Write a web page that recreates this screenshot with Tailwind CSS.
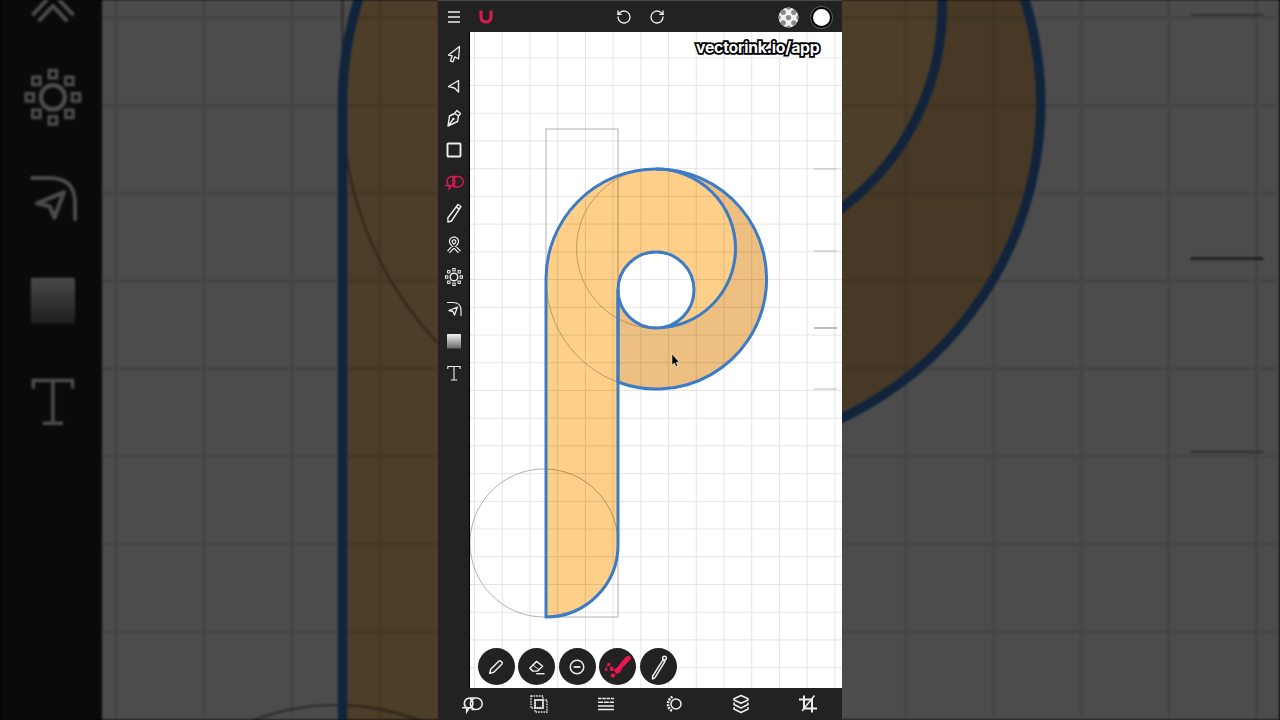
<!DOCTYPE html>
<html lang="en">
<head>
    <meta charset="UTF-8">
    <title>vectorink.io/app</title>
    <script src="https://cdn.jsdelivr.net/npm/@tailwindcss/browser@4"></script>
</head>
<body class="bg-black">
    <!-- Shared icons and the drawing, used by the app and by the blurred backdrop -->
    <svg class="absolute w-0 h-0" aria-hidden="true">
        <defs>
            <pattern id="grid" x="474" y="57.3" width="27.72" height="27.72" patternUnits="userSpaceOnUse">
                <path d="M0 27.72V0H27.72" fill="none" stroke="#e4e4e4" stroke-width="2"/>
            </pattern>
            <linearGradient id="fade" x1="0" y1="0" x2="0" y2="1">
                <stop offset="0" stop-color="#f4f4f4"/>
                <stop offset="1" stop-color="#666"/>
            </linearGradient>
            <clipPath id="chk"><circle cx="10" cy="10" r="9.5"/></clipPath>

            <g id="drawing" class="isolate">
                <rect x="470" y="32" width="372" height="656" fill="#fff"/>
                <rect x="470" y="32" width="372" height="656" fill="url(#grid)"/>
                <!-- guides -->
                <g fill="none" stroke="#a2a2a2" stroke-width="0.7">
                    <rect x="546" y="129" width="72" height="488" stroke="#909090"/>
                    <circle cx="544" cy="543" r="74" stroke="#909090"/>
                    <circle cx="656.5" cy="248.5" r="80"/>
                    <circle cx="656" cy="279" r="110"/>
                    <path d="M814 169H837M814 251H837M814 389H837"/>
                    <path d="M814 328H837" stroke="#444"/>
                </g>
                <!-- letter p: fills multiply so the grid and guides show through -->
                <g class="mix-blend-multiply">
                    <path fill="#edc081" d="M656 169A110 110 0 1 1 618 382V290A38 38 0 0 0 656 328A79.5 79.5 0 0 0 656 169Z"/>
                    <path fill="#fdcf88" d="M546 617V279A110 110 0 0 1 656 169A79.5 79.5 0 0 1 656 328A38 38 0 0 0 656 252A38 38 0 0 0 618 290V545A72 72 0 0 1 546 617Z"/>
                </g>
                <g fill="none" stroke="#3b7bc8" stroke-width="3" stroke-linejoin="round">
                    <path d="M656 169A110 110 0 1 1 618 382V290A38 38 0 0 0 656 328"/>
                    <path d="M546 617V279A110 110 0 0 1 656 169A79.5 79.5 0 0 1 656 328A38 38 0 0 0 656 252A38 38 0 0 0 618 290V545A72 72 0 0 1 546 617Z"/>
                </g>
                <path d="M672 354V365L674.5 363L676 366.5L677.6 365.6L676.2 362.4L679 362Z" fill="#000" stroke="#fff" stroke-width="0.5"/>
            </g>
        </defs>

        <symbol id="i-select" viewBox="0 0 20 20"><path d="M15.5 2.5L4.5 11L8.3 11.8L6.3 16.8L9 17.8L10.8 12.8L14.5 15Z" fill="none" stroke="currentColor" stroke-width="1.3" stroke-linejoin="round"/></symbol>
        <symbol id="i-direct" viewBox="0 0 20 20"><path d="M14.5 4.5L4.5 10.5L10.5 12L14.5 16Z" fill="none" stroke="currentColor" stroke-width="1.4" stroke-linejoin="round"/></symbol>
        <symbol id="i-pen" viewBox="0 0 20 20"><path d="M13 2.5L16.5 5.5L14.5 8L13.5 13.5L4 18L5.5 8L10.5 5.5ZM10.5 5.5L14.5 8M4.5 17.5L8.5 12" fill="none" stroke="currentColor" stroke-width="1.4" stroke-linejoin="round"/><circle cx="9.3" cy="11" r="1.3" fill="currentColor"/></symbol>
        <symbol id="i-rect" viewBox="0 0 20 20"><rect x="3.5" y="3.5" width="13" height="13" rx="0.8" fill="none" stroke="currentColor" stroke-width="1.9"/></symbol>
        <symbol id="i-builder" viewBox="0 0 20 20"><g fill="none" stroke="currentColor" stroke-width="1.4"><path d="M4.5 13A5 5 0 0 1 7.5 4.5H14A5.2 5.2 0 0 1 14 15H9.5"/><path d="M8 5A5 5 0 0 1 8 14M12 5A5 5 0 0 0 12 14.5"/><path d="M1 13.5H7.5L5.2 17V13.5"/></g></symbol>
        <symbol id="i-pencil" viewBox="0 0 20 20"><path d="M14 1.5L17 3.5L7.5 18L4 19L3.8 15ZM12.3 4.2L15.4 6.2" fill="none" stroke="currentColor" stroke-width="1.4" stroke-linejoin="round"/></symbol>
        <symbol id="i-knot" viewBox="0 0 20 20"><g fill="none" stroke-linejoin="round"><path d="M15.5 17L7.5 8.5Q5.5 5 9 3.5H11Q14.5 5 12.5 8.5L4.5 17" stroke="currentColor" stroke-width="4"/><path d="M15.5 17L7.5 8.5Q5.5 5 9 3.5H11Q14.5 5 12.5 8.5L4.5 17" stroke="#222" stroke-width="1.5"/></g></symbol>
        <symbol id="i-gear" viewBox="0 0 20 20"><g fill="none" stroke="currentColor"><circle cx="10" cy="10" r="3.8" stroke-width="1.4"/><g stroke-width="1"><rect x="8.8" y="1.5" width="2.4" height="2.4"/><rect x="8.8" y="16.1" width="2.4" height="2.4"/><rect x="16.1" y="8.8" width="2.4" height="2.4"/><rect x="1.5" y="8.8" width="2.4" height="2.4"/><rect x="14" y="3.6" width="2.4" height="2.4"/><rect x="3.6" y="3.6" width="2.4" height="2.4"/><rect x="14" y="14" width="2.4" height="2.4"/><rect x="3.6" y="14" width="2.4" height="2.4"/></g></g></symbol>
        <symbol id="i-curve" viewBox="0 0 20 20"><g fill="none" stroke="currentColor" stroke-linejoin="round"><path d="M3 3.5H9Q17 3.5 17 11.5V17" stroke-width="1.2"/><path d="M13.5 8L5 11.5L9 12.5L10.5 16Z" stroke-width="1.3"/></g></symbol>
        <symbol id="i-fade" viewBox="0 0 20 20"><rect x="3" y="3" width="14" height="14.5" rx="0.6" fill="url(#fade)"/></symbol>
        <symbol id="i-t" viewBox="0 0 20 20"><g fill="none" stroke="currentColor" stroke-width="1.1"><path d="M10 3.5V17M6.8 17H13.2M3.8 6V3.5H16.2V6"/></g></symbol>
    </svg>

    <!-- Backdrop: the same screen, enlarged and dimmed -->
    <svg class="absolute inset-0 w-[1280px] h-[720px] blur-[0.8px]" viewBox="0 0 1280 720" aria-hidden="true">
        <g transform="translate(640 360) scale(3.165) translate(-640 -360)">
            <use href="#drawing"/>
            <rect x="438" y="0" width="32" height="720" fill="#222"/>
            <g class="text-white">
                <use href="#i-knot" x="444.5" y="235" width="20" height="20"/>
                <use href="#i-gear" x="444.5" y="267" width="20" height="20"/>
                <use href="#i-curve" x="444.5" y="299" width="20" height="20"/>
                <use href="#i-fade" x="444.5" y="331" width="20" height="20"/>
                <use href="#i-t" x="444.5" y="363" width="20" height="20"/>
            </g>
        </g>
        <rect width="1280" height="720" fill="#000" fill-opacity="0.7"/>
    </svg>

    <!-- App -->
    <div class="relative mx-auto w-[404px] h-[720px] flex flex-col bg-[#222] overflow-hidden">
        <!-- Top bar -->
        <header class="h-8 shrink-0 grid grid-cols-[1fr_auto_1fr] items-center text-[#eee] border-t border-[#4a4a4a]">
            <div class="flex">
                <button class="w-8 h-8 flex items-center justify-center">
                    <svg class="w-5 h-5" viewBox="0 0 20 20" fill="none" stroke="currentColor" stroke-width="1.6"><path d="M4 5H16M4 10H16M4 15H16"/></svg>
                </button>
                <button class="w-8 h-8 flex items-center justify-center text-[#d81b50]">
                    <svg class="w-5 h-5" viewBox="0 0 20 20" fill="none" stroke="currentColor" stroke-width="3.2"><path d="M5 3.5V10A5 5 0 0 0 15 10V3.5"/></svg>
                </button>
            </div>
            <div class="flex">
                <button class="w-[33px] h-8 flex items-center justify-center">
                    <svg class="w-4 h-4" viewBox="0 0 24 24" fill="none" stroke="currentColor" stroke-width="2" stroke-linecap="round" stroke-linejoin="round"><path d="M3 12a9 9 0 1 0 3-6.7L3 8"/><path d="M3 3v5h5"/></svg>
                </button>
                <button class="w-[33px] h-8 flex items-center justify-center">
                    <svg class="w-4 h-4" viewBox="0 0 24 24" fill="none" stroke="currentColor" stroke-width="2" stroke-linecap="round" stroke-linejoin="round"><path d="M21 12a9 9 0 1 1-3-6.7L21 8"/><path d="M21 3v5h-5"/></svg>
                </button>
            </div>
            <div class="flex justify-end pr-1">
                <button class="w-[33px] h-8 flex items-center justify-center">
                    <svg class="w-[21px] h-[21px]" viewBox="0 0 20 20">
                        <g clip-path="url(#chk)">
                            <rect width="20" height="20" fill="#f0f0f0"/>
                            <g fill="#8a8a8a">
                                <circle cx="5" cy="5" r="2.5"/><circle cx="10" cy="10" r="2.5"/><circle cx="15" cy="5" r="2.5"/>
                                <circle cx="5" cy="15" r="2.5"/><circle cx="15" cy="15" r="2.5"/><circle cx="10" cy="0" r="2.5"/><circle cx="0" cy="10" r="2.5"/><circle cx="20" cy="10" r="2.5"/><circle cx="10" cy="20" r="2.5"/>
                            </g>
                        </g>
                    </svg>
                </button>
                <button class="w-[33px] h-8 flex items-center justify-center">
                    <span class="w-[21px] h-[21px] rounded-full bg-white border-2 border-black ring-1 ring-[#555]"></span>
                </button>
            </div>
        </header>

        <div class="flex-1 min-h-0 flex">
            <!-- Left tools -->
            <nav class="w-8 shrink-0 pt-[6px] flex flex-col items-center text-[#eee] border-r border-black">
                <button class="h-[31.9px] flex items-center"><svg class="w-5 h-5"><use href="#i-select"/></svg></button>
                <button class="h-[31.9px] flex items-center"><svg class="w-5 h-5"><use href="#i-direct"/></svg></button>
                <button class="h-[31.9px] flex items-center"><svg class="w-5 h-5"><use href="#i-pen"/></svg></button>
                <button class="h-[31.9px] flex items-center"><svg class="w-5 h-5"><use href="#i-rect"/></svg></button>
                <button class="h-[31.9px] flex items-center text-[#d81b50]"><svg class="w-5 h-5"><use href="#i-builder"/></svg></button>
                <button class="h-[31.9px] flex items-center"><svg class="w-5 h-5"><use href="#i-pencil"/></svg></button>
                <button class="h-[31.9px] flex items-center"><svg class="w-5 h-5"><use href="#i-knot"/></svg></button>
                <button class="h-[31.9px] flex items-center"><svg class="w-5 h-5"><use href="#i-gear"/></svg></button>
                <button class="h-[31.9px] flex items-center"><svg class="w-5 h-5"><use href="#i-curve"/></svg></button>
                <button class="h-[31.9px] flex items-center"><svg class="w-5 h-5"><use href="#i-fade"/></svg></button>
                <button class="h-[31.9px] flex items-center"><svg class="w-5 h-5"><use href="#i-t"/></svg></button>
            </nav>

            <!-- Canvas -->
            <main class="relative flex-1 min-w-0">
                <svg class="w-full h-full block" viewBox="470 32 372 656"><use href="#drawing"/></svg>

                <span class="absolute top-[7px] right-[22.5px] font-['Inter',sans-serif] font-bold text-[15.8px] leading-[18px] tracking-[-0.25px] text-white [-webkit-text-stroke:3.5px_#000] [paint-order:stroke_fill]">vectorink.io/app</span>

                <!-- Floating stroke tools -->
                <div class="absolute left-[7.5px] bottom-[3px] flex gap-[3.5px]">
                    <button class="w-[37px] h-[37px] rounded-full bg-[#222] text-[#eee] flex items-center justify-center">
                        <svg class="w-[18px] h-[18px]" viewBox="0 0 24 24" fill="none" stroke="currentColor" stroke-width="1.9" stroke-linejoin="round"><path d="M3.5 20.5L5 15L16 4Q17.3 3 18.5 4.2L19.8 5.5Q21 6.7 20 8L9 19Z"/></svg>
                    </button>
                    <button class="w-[37px] h-[37px] rounded-full bg-[#222] text-[#eee] flex items-center justify-center">
                        <svg class="w-[18px] h-[18px]" viewBox="0 0 24 24" fill="none" stroke="currentColor" stroke-width="1.9" stroke-linejoin="round"><path d="M2.5 13.5L11.5 4.5L19.5 11L12.5 17.5H6.5Z"/><path d="M6.5 9.5L14.5 15.5" stroke-width="1.2"/><path d="M11 21H22"/></svg>
                    </button>
                    <button class="w-[37px] h-[37px] rounded-full bg-[#222] text-[#eee] flex items-center justify-center">
                        <svg class="w-[18px] h-[18px]" viewBox="0 0 24 24" fill="none" stroke="currentColor" stroke-width="2"><circle cx="12" cy="12" r="9"/><path d="M7.5 12H16.5" stroke-width="2.4"/></svg>
                    </button>
                    <button class="w-[37px] h-[37px] rounded-full bg-[#222] text-[#e8174f] flex items-center justify-center">
                        <svg class="w-[30px] h-[30px]" viewBox="0 0 24 24" fill="currentColor"><path d="M20.5 3Q23 3.5 22 6L15.5 12.5L13.5 16.5L10.5 17.5L8.5 14L11 12.5L17.5 4.5Q19 3 20.5 3Z"/><path d="M3.5 9L5.8 8.5L5.8 11.2L3.2 11.5Z"/><path d="M5.5 12L8.5 11.8L8.2 15L5.8 15.2Z"/><path d="M7 17L10.2 17.8L8.5 20.8L6 19.5Z"/><path d="M1.5 12.5L3.5 12.5L3.5 15L1.8 15Z"/></svg>
                    </button>
                    <button class="w-[37px] h-[37px] rounded-full bg-[#222] text-[#eee] flex items-center justify-center">
                        <svg class="w-[30px] h-[30px]" viewBox="0 0 24 24" fill="none" stroke="currentColor" stroke-width="1.2" stroke-linejoin="round"><path d="M15.8 6.5L17.6 7.4L9.6 20.5L7.6 21.6L7.7 19.4Z"/><circle cx="17.2" cy="4.8" r="1.5"/></svg>
                    </button>
                </div>
            </main>
        </div>

        <!-- Bottom bar -->
        <footer class="h-8 shrink-0 grid grid-cols-6 items-center justify-items-center text-[#eee]">
            <button><svg class="w-[22px] h-[22px] block"><use href="#i-builder"/></svg></button>
            <button>
                <svg class="w-5 h-5 block" viewBox="0 0 20 20" fill="none" stroke="currentColor"><rect x="2" y="2" width="12" height="12" stroke-width="1.3" stroke-dasharray="1.6 1"/><rect x="6" y="6" width="12" height="12" stroke-width="1.3" stroke-dasharray="1.6 1"/><rect x="6" y="6" width="8" height="8" stroke-width="1.4"/></svg>
            </button>
            <button>
                <svg class="w-5 h-5 block" viewBox="0 0 20 20" fill="none" stroke="currentColor" stroke-width="1.6"><path d="M2 4.5H18" stroke-dasharray="3.5 0.8"/><path d="M2 8.2H18" stroke-dasharray="5 0.8"/><path d="M2 12H18M2 15.5H18"/></svg>
            </button>
            <button>
                <svg class="w-5 h-5 block" viewBox="0 0 20 20" fill="none" stroke="currentColor"><circle cx="12" cy="10" r="5" stroke-width="1.5"/><path d="M8.5 2.8A8 8 0 0 0 8.5 17.2" stroke-width="2.6" stroke-dasharray="2 1"/></svg>
            </button>
            <button>
                <svg class="w-5 h-5 block" viewBox="0 0 20 20" fill="none" stroke="currentColor" stroke-width="1.6" stroke-linejoin="round"><path d="M10 1.5L17 4.8V6L10 9.3L3 6V4.8Z"/><path d="M3.2 8.5L3 10.5L10 14L17 10.5L16.8 8.5"/><path d="M3.2 13.2L3 15L10 18.5L17 15L16.8 13.2"/></svg>
            </button>
            <button>
                <svg class="w-5 h-5 block" viewBox="0 0 20 20" fill="none" stroke="currentColor" stroke-width="2"><path d="M6 1.5V14.5H19"/><path d="M1 5.5H14V18.5"/><path d="M16.5 1.5L4 17" stroke-width="1.5"/></svg>
            </button>
        </footer>
    </div>
</body>
</html>
